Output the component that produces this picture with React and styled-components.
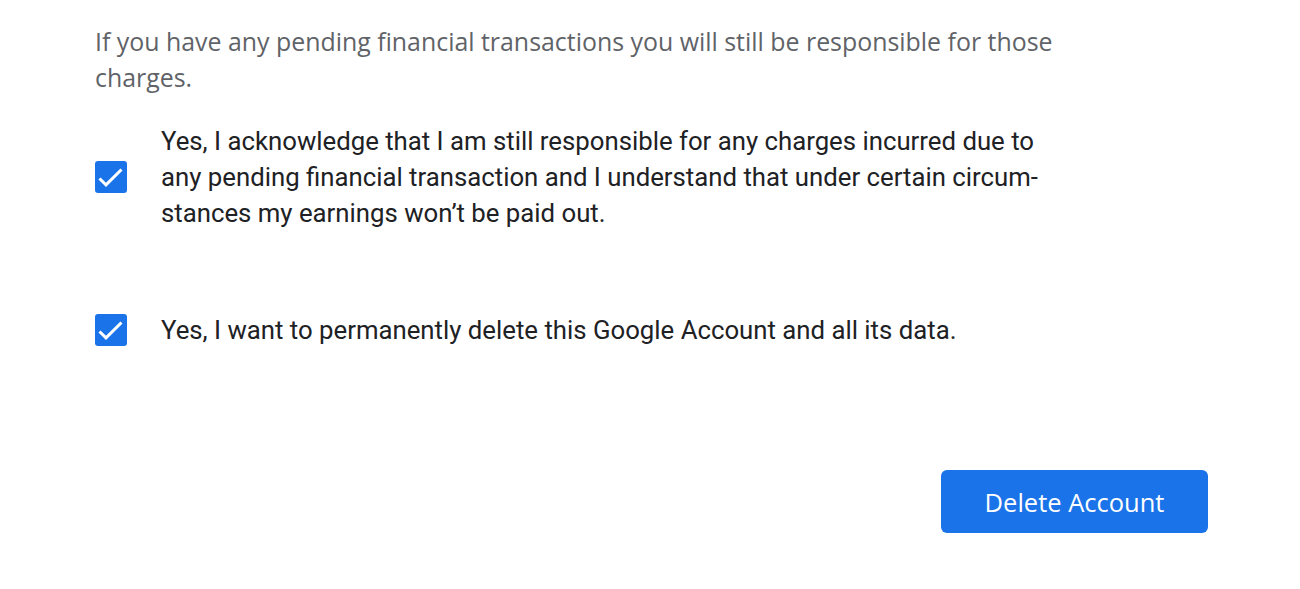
import React from 'react';
import styled, { createGlobalStyle } from 'styled-components';

const GlobalStyle = createGlobalStyle`
  html, body {
    margin: 0;
    background: #fff;
  }
`;

const Page = styled.div`
  width: 1300px;
  box-sizing: border-box;
  padding: 23px 92px 0 95px;
  display: flex;
  flex-flow: column nowrap;
`;

const Intro = styled.p`
  margin: 0;
  font-family: "Open Sans", Roboto, sans-serif;
  font-size: 24.9px;
  line-height: 36px;
  color: #5f6368;
  white-space: nowrap;
`;

const Option = styled.label`
  display: flex;
  align-items: center;
  gap: 34px;
  margin-top: ${props => props.$top}px;
  cursor: pointer;
`;

const Box = styled.span`
  flex: none;
  width: 32px;
  height: 32px;
  border-radius: 3px;
  background: #1a73e8;
  display: flex;
`;

const Label = styled.span`
  font-family: Roboto, "Liberation Sans", sans-serif;
  font-size: 25.75px;
  line-height: 36px;
  color: #202124;
  white-space: nowrap;
`;

const Actions = styled.div`
  display: flex;
  justify-content: flex-end;
  margin-top: 122px;
`;

const DeleteButton = styled.button`
  width: 267px;
  height: 63px;
  border: none;
  border-radius: 6px;
  background: #1a73e8;
  color: #fff;
  font-family: "Open Sans", Roboto, sans-serif;
  font-size: 25.5px;
  font-weight: 500;
  cursor: pointer;
`;

function Check() {
  return (
    <Box>
      <svg width="32" height="32" viewBox="0 0 32 32">
        <path d="M4.5 17.5L11 23.8L26.5 8.5" fill="none" stroke="#fff" strokeWidth="3" />
      </svg>
    </Box>
  );
}

export default function App() {
  return (
    <>
      <GlobalStyle />
      <Page>
        <Intro>
          If you have any pending financial transactions you will still be responsible for those<br />
          charges.
        </Intro>
        <Option $top={28}>
          <Check />
          <Label>
            Yes, I acknowledge that I am still responsible for any charges incurred due to<br />
            any pending financial transaction and I understand that under certain circum-<br />
            stances my earnings won’t be paid out.
          </Label>
        </Option>
        <Option $top={81}>
          <Check />
          <Label>Yes, I want to permanently delete this Google Account and all its data.</Label>
        </Option>
        <Actions>
          <DeleteButton>Delete Account</DeleteButton>
        </Actions>
      </Page>
    </>
  );
}
